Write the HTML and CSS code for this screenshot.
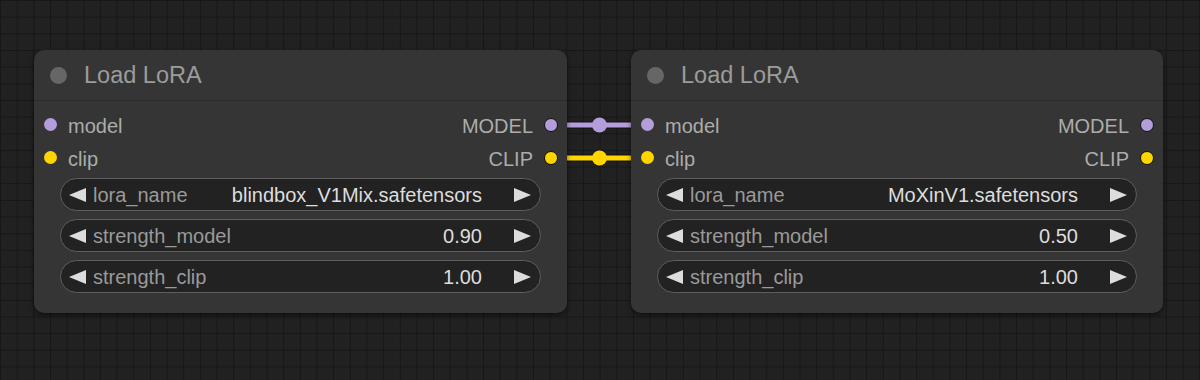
FILE: index.html
```html
<!DOCTYPE html>
<html>
<head>
<meta charset="utf-8">
<link rel="stylesheet" href="styles.css">
</head>
<body>
<div class="canvas">
  <svg class="links" width="1200" height="380" viewBox="0 0 1200 380">
    <line x1="551" y1="125" x2="648" y2="125" stroke="#111" stroke-opacity="0.6" stroke-width="8"/>
    <line x1="551" y1="125" x2="648" y2="125" stroke="#b39ddb" stroke-width="5"/>
    <circle cx="599.5" cy="125" r="7.5" fill="#b39ddb"/>
    <line x1="551" y1="158" x2="648" y2="158" stroke="#111" stroke-opacity="0.6" stroke-width="8"/>
    <line x1="551" y1="158" x2="648" y2="158" stroke="#ffd500" stroke-width="5"/>
    <circle cx="599.5" cy="158" r="7.5" fill="#ffd500"/>
  </svg>

  <div class="node node-a">
    <div class="title"><span class="title-dot"></span><span class="title-text">Load LoRA</span></div>
    <div class="slots">
      <div class="slot-row">
        <div class="in"><span class="dot model"></span><span class="in-label">model</span></div>
        <div class="out"><span class="out-label">MODEL</span><span class="dot model outline"></span></div>
      </div>
      <div class="slot-row">
        <div class="in"><span class="dot clip"></span><span class="in-label">clip</span></div>
        <div class="out"><span class="out-label">CLIP</span><span class="dot clip outline"></span></div>
      </div>
    </div>
    <div class="widgets">
      <div class="widget">
        <svg class="arrow" width="17" height="14" viewBox="0 0 17 14"><polygon points="17,0 17,14 0,7" /></svg>
        <span class="w-label">lora_name</span>
        <span class="w-value">blindbox_V1Mix.safetensors</span>
        <svg class="arrow arrow-r" width="17" height="14" viewBox="0 0 17 14"><polygon points="0,0 0,14 17,7" /></svg>
      </div>
      <div class="widget">
        <svg class="arrow" width="17" height="14" viewBox="0 0 17 14"><polygon points="17,0 17,14 0,7" /></svg>
        <span class="w-label">strength_model</span>
        <span class="w-value">0.90</span>
        <svg class="arrow arrow-r" width="17" height="14" viewBox="0 0 17 14"><polygon points="0,0 0,14 17,7" /></svg>
      </div>
      <div class="widget">
        <svg class="arrow" width="17" height="14" viewBox="0 0 17 14"><polygon points="17,0 17,14 0,7" /></svg>
        <span class="w-label">strength_clip</span>
        <span class="w-value">1.00</span>
        <svg class="arrow arrow-r" width="17" height="14" viewBox="0 0 17 14"><polygon points="0,0 0,14 17,7" /></svg>
      </div>
    </div>
  </div>

  <div class="node node-b">
    <div class="title"><span class="title-dot"></span><span class="title-text">Load LoRA</span></div>
    <div class="slots">
      <div class="slot-row">
        <div class="in"><span class="dot model"></span><span class="in-label">model</span></div>
        <div class="out"><span class="out-label">MODEL</span><span class="dot model outline"></span></div>
      </div>
      <div class="slot-row">
        <div class="in"><span class="dot clip"></span><span class="in-label">clip</span></div>
        <div class="out"><span class="out-label">CLIP</span><span class="dot clip outline"></span></div>
      </div>
    </div>
    <div class="widgets">
      <div class="widget">
        <svg class="arrow" width="17" height="14" viewBox="0 0 17 14"><polygon points="17,0 17,14 0,7" /></svg>
        <span class="w-label">lora_name</span>
        <span class="w-value">MoXinV1.safetensors</span>
        <svg class="arrow arrow-r" width="17" height="14" viewBox="0 0 17 14"><polygon points="0,0 0,14 17,7" /></svg>
      </div>
      <div class="widget">
        <svg class="arrow" width="17" height="14" viewBox="0 0 17 14"><polygon points="17,0 17,14 0,7" /></svg>
        <span class="w-label">strength_model</span>
        <span class="w-value">0.50</span>
        <svg class="arrow arrow-r" width="17" height="14" viewBox="0 0 17 14"><polygon points="0,0 0,14 17,7" /></svg>
      </div>
      <div class="widget">
        <svg class="arrow" width="17" height="14" viewBox="0 0 17 14"><polygon points="17,0 17,14 0,7" /></svg>
        <span class="w-label">strength_clip</span>
        <span class="w-value">1.00</span>
        <svg class="arrow arrow-r" width="17" height="14" viewBox="0 0 17 14"><polygon points="0,0 0,14 17,7" /></svg>
      </div>
    </div>
  </div>
</div>
</body>
</html>
```

FILE: styles.css
```css
* { box-sizing: border-box; }
html, body {
  margin: 0;
  padding: 0;
  width: 1200px;
  height: 380px;
  overflow: hidden;
}
body {
  font-family: "Liberation Sans", Arial, sans-serif;
  background: #202020;
}
.canvas {
  position: relative;
  width: 1200px;
  height: 380px;
  background-color: #212121;
  background-image:
    linear-gradient(to right, #171717 1px, transparent 1px),
    linear-gradient(to bottom, #171717 1px, transparent 1px);
  background-size: 16.667px 16.667px;
  background-position: 0 0;
}
.links {
  position: absolute;
  left: 0;
  top: 0;
}
.node {
  position: absolute;
  top: 50px;
  height: 263px;
  background: #353535;
  border-radius: 10px;
  box-shadow: 0 2px 5px rgba(0, 0, 0, 0.55);
  display: flex;
  flex-direction: column;
}
.node-a { left: 34px; width: 533px; }
.node-b { left: 631px; width: 532px; }

.title {
  height: 51px;
  display: flex;
  align-items: center;
  padding-left: 16px;
  border-bottom: 1px solid #2b2b2b;
}
.title-dot {
  width: 17px;
  height: 17px;
  border-radius: 50%;
  background: #666;
}
.title-text {
  margin-left: 17px;
  padding-top: 1px;
  font-size: 23.5px;
  color: #9c9c9c;
}

.slots {
  padding-top: 7px;
  display: flex;
  flex-direction: column;
}
.slot-row {
  height: 33px;
  display: flex;
  align-items: center;
  justify-content: space-between;
  padding: 0 9px 0 10px;
}
.in, .out {
  display: flex;
  align-items: center;
}
.dot {
  width: 13px;
  height: 13px;
  border-radius: 50%;
}
.dot.model { background: #b39ddb; }
.dot.clip { background: #ffd500; }
.dot.outline {
  width: 14px;
  height: 14px;
  border: 1.5px solid #111;
}
.in-label {
  margin-left: 11px;
  padding-top: 3px;
  font-size: 20px;
  color: #acacac;
}
.out-label {
  margin-right: 11px;
  padding-top: 3px;
  font-size: 20px;
  color: #acacac;
}

.widgets {
  margin-top: 4px;
  padding: 0 26px;
  display: flex;
  flex-direction: column;
  gap: 8px;
}
.widget {
  height: 33px;
  border: 1px solid #5e5e5e;
  border-radius: 17px;
  background: #222;
  display: flex;
  align-items: center;
  padding: 0 9px 0 8px;
}
.arrow { fill: #dddddd; flex: none; }
.arrow-r { margin-left: 32px; }
.w-label {
  margin-left: 7px;
  padding-top: 2px;
  flex: 1;
  font-size: 20px;
  color: #9a9a9a;
  white-space: nowrap;
}
.w-value {
  padding-top: 2px;
  font-size: 20px;
  color: #dddddd;
  white-space: nowrap;
}
```
